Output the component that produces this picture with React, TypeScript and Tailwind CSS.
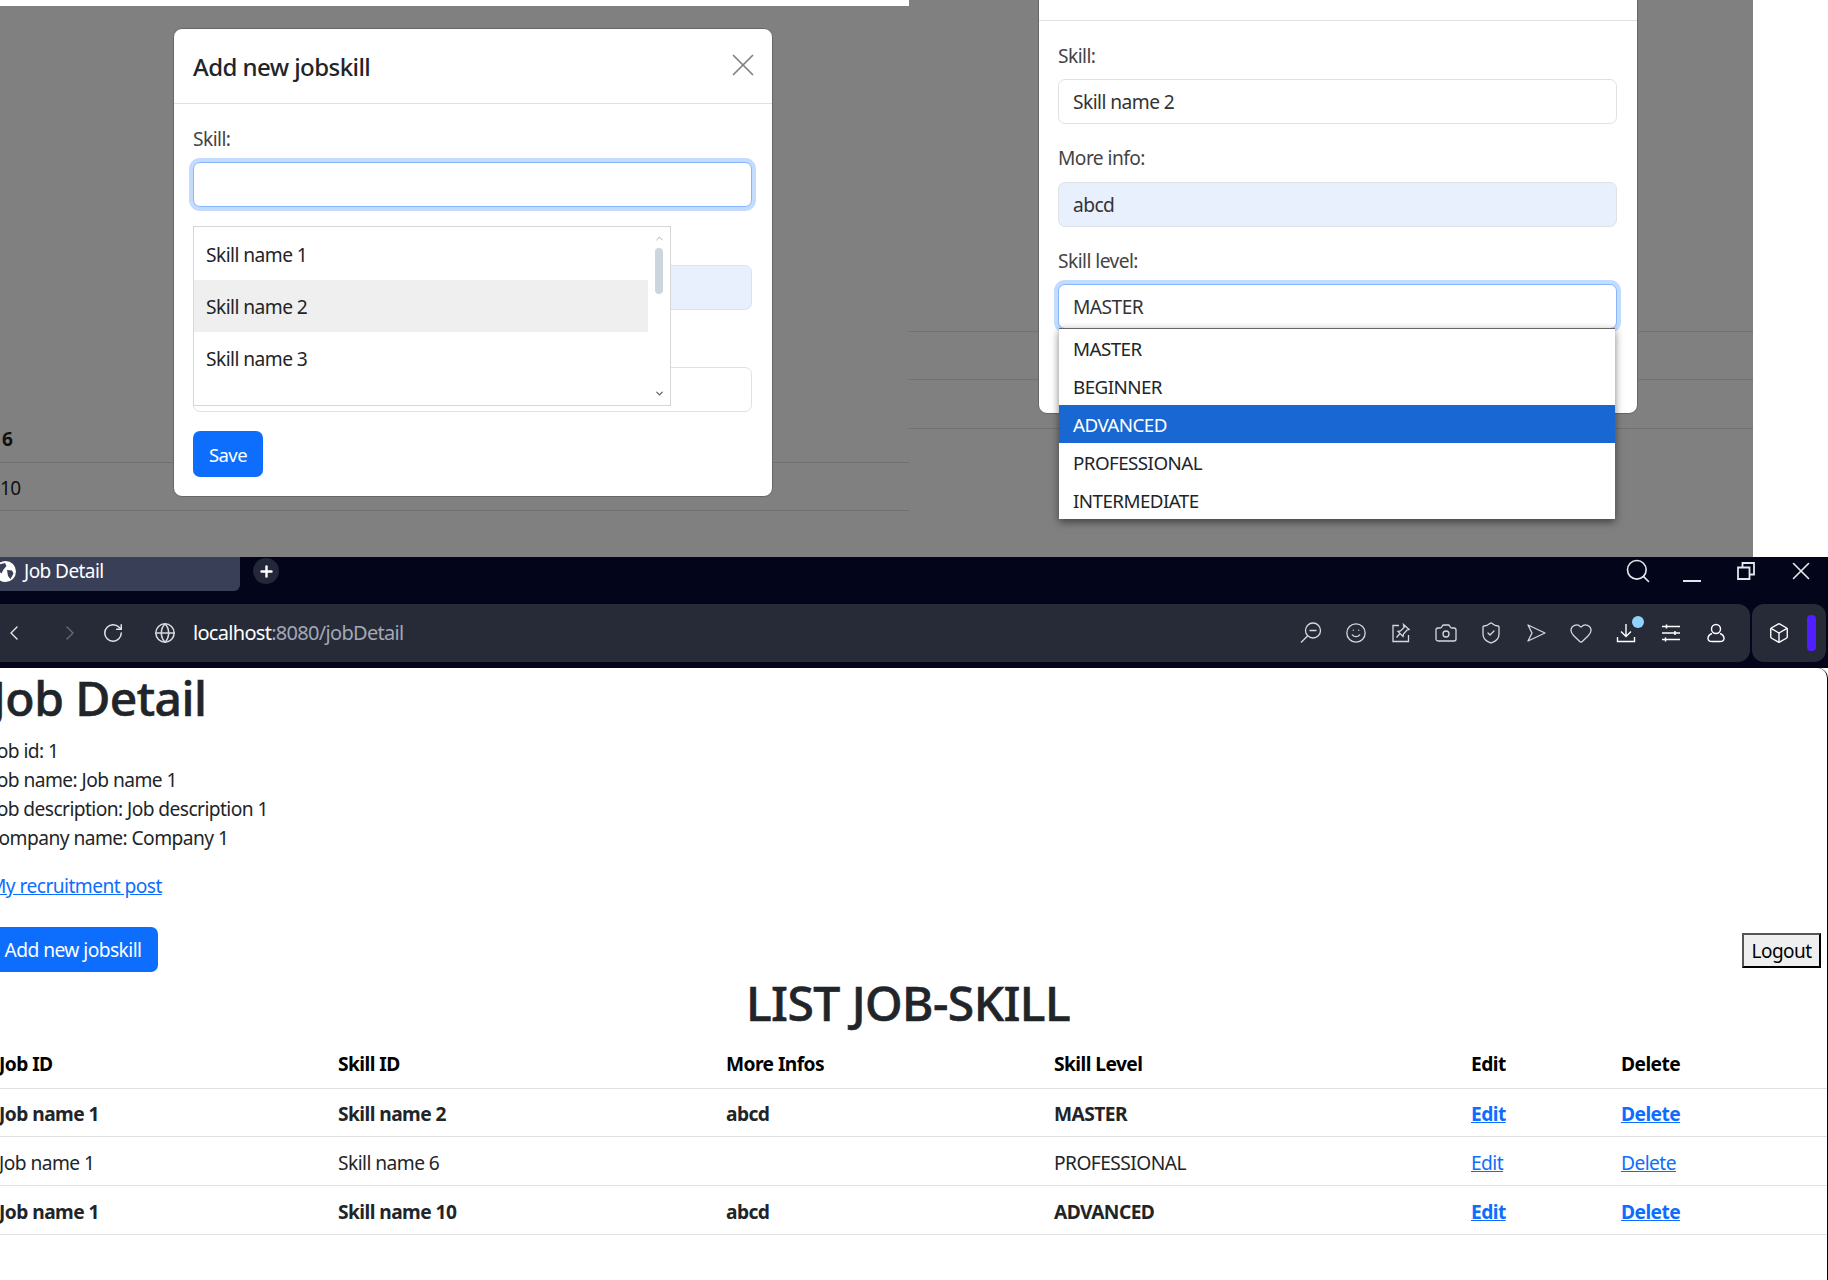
import { Box, Camera, ChevronDown, ChevronLeft, ChevronRight, ChevronUp, Globe, Heart, Plus, RotateCw, Search, ShieldCheck, Smile, X } from "lucide-react";

const ui = "font-['Noto_Sans',sans-serif] tracking-[-0.035em]";

const jobRows = [
  { skill: "Skill name 2", info: "abcd", level: "MASTER", bold: true },
  { skill: "Skill name 6", info: "", level: "PROFESSIONAL", bold: false },
  { skill: "Skill name 10", info: "abcd", level: "ADVANCED", bold: true },
];

const levels = ["MASTER", "BEGINNER", "ADVANCED", "PROFESSIONAL", "INTERMEDIATE"];

function Field({ label, value, tinted, focused, children }: { label: string; value?: string; tinted?: boolean; focused?: boolean; children?: React.ReactNode }) {
  return (
    <div className="mb-[19px]">
      <div className="mb-[9.6px] h-[28.8px] text-[19.2px] leading-[29px] text-[#444]">{label}</div>
      <div className="relative">
        <div
          className={`h-[45px] rounded-[7px] border px-[14px] text-[19.2px] leading-[43px] text-[#333] ${
            focused
              ? "border-[#86b7fe] bg-white shadow-[0_0_0_4px_rgba(13,110,253,0.25)]"
              : tinted
                ? "border-[#dee2e6] bg-[#e8f0fe]"
                : "border-[#dee2e6] bg-white"
          }`}
        >
          {value}
        </div>
        {children}
      </div>
    </div>
  );
}

function Modal({ className, children }: { className: string; children: React.ReactNode }) {
  return <div className={`absolute h-[469px] w-[600px] rounded-[9px] border border-[#666] bg-white ${className}`}>{children}</div>;
}

function ModalHeader() {
  return (
    <div className="flex h-[75px] items-center justify-between border-b border-[#dee2e6] pl-[19px] pr-[19px]">
      <span className="pt-[2px] text-[24px] font-medium text-[#212529]">Add new jobskill</span>
      <X size={38} strokeWidth={1.1} className="mb-[3px] mr-[-9px] text-[#808080]" />
    </div>
  );
}

function BackdropRow({ text, bold }: { text?: string; bold?: boolean }) {
  return <div className={`h-[48.5px] border-b border-[#6f7173] text-[19px] leading-[50px] text-[#111] ${bold ? "pl-[2px] font-bold" : ""}`}>{text}</div>;
}

function ToolIcon({ children }: { children: React.ReactNode }) {
  return <span className="flex h-[45px] w-[45px] items-center justify-center text-[#d6d8dd]">{children}</span>;
}

function Toolbar() {
  return (
    <div className="flex h-[64px] gap-[2px] bg-[#03061a] pb-[6px] pr-[2px]">
      <div className="flex h-[58px] flex-1 items-center rounded-r-[12px] bg-[#272b38]">
        <ChevronLeft size={24} strokeWidth={1.4} className="ml-[2px] text-[#e8e8e8]" />
        <ChevronRight size={24} strokeWidth={1.4} className="ml-[32px] text-[#666a75]" />
        <RotateCw size={22} strokeWidth={1.6} className="ml-[20px] text-[#e6e6e6]" />
        <Globe size={22} strokeWidth={1.7} className="ml-[30px] text-[#d6d8dd]" />
        <span className={`${ui} ml-[17px] text-[20px]`}>
          <span className="text-white">localhost</span>
          <span className="text-[#a3a8b4]">:8080/jobDetail</span>
        </span>
        <div className="ml-auto mr-[12px] flex">
          <ToolIcon>
            <svg width="22" height="22" viewBox="0 0 22 22" fill="none" stroke="currentColor" strokeWidth="1.3">
              <circle cx="13" cy="8.5" r="7.5" />
              <path d="M9.5 8.5h7M7.5 14L1 20.5" />
            </svg>
          </ToolIcon>
          <ToolIcon>
            <Smile size={22} strokeWidth={1.4} />
          </ToolIcon>
          <ToolIcon>
            <svg width="20" height="20" viewBox="0 0 20 20" fill="none" stroke="currentColor" strokeWidth="1.3">
              <path d="M8 2.5H2v16h15.5V12" />
              <path d="M12.5 1.5l5.5 5-2 .5-3.5 4-.5 2.5-5-5 2.5-.5 3.5-3.5zM9 10.5l-3.5 4" />
            </svg>
          </ToolIcon>
          <ToolIcon>
            <Camera size={24} strokeWidth={1.3} />
          </ToolIcon>
          <ToolIcon>
            <ShieldCheck size={24} strokeWidth={1.3} />
          </ToolIcon>
          <ToolIcon>
            <svg width="20" height="20" viewBox="0 0 20 20" fill="none" stroke="currentColor" strokeWidth="1.3" strokeLinejoin="round">
              <path d="M2 2l17 8-17 8 4-8z" />
            </svg>
          </ToolIcon>
          <ToolIcon>
            <Heart size={24} strokeWidth={1.3} />
          </ToolIcon>
          <ToolIcon>
            <span className="relative">
              <svg width="20" height="20" viewBox="0 0 20 20" fill="none" stroke="currentColor" strokeWidth="1.4" className="text-white">
                <path d="M10 1v12M5 8.5l5 5 5-5M1.5 14v4.5h17V14" />
              </svg>
              <span className="absolute left-[16px] top-[-7px] h-[12px] w-[12px] rounded-full bg-[#8fd4ff]" />
            </span>
          </ToolIcon>
          <ToolIcon>
            <svg width="20" height="20" viewBox="0 0 20 20" fill="none" stroke="currentColor" strokeWidth="1.5" className="text-white">
              <path d="M1 3.5h18M1 10h18M1 16.5h18M5.5 1.5v4M14 8v4M4.5 14.5v4" />
            </svg>
          </ToolIcon>
          <ToolIcon>
            <svg width="20" height="20" viewBox="0 0 20 20" fill="none" stroke="currentColor" strokeWidth="1.4" className="text-white">
              <circle cx="10" cy="6" r="4.5" />
              <path d="M6 10.5C3.5 11.5 2 13 2 15.5c0 2.5 2 3 4 3h8c2 0 4-.5 4-3 0-2.5-1.5-4-4-5" />
            </svg>
          </ToolIcon>
        </div>
      </div>
      <div className="flex h-[58px] w-[74px] items-center rounded-[12px] bg-[#272b38] pl-[16px]">
        <Box size={22} strokeWidth={1.5} className="text-white" />
        <span className="ml-[17px] h-[36px] w-[9px] rounded-[4px] bg-[#4f1fff]" />
      </div>
    </div>
  );
}

export default function App() {
  return (
    <div className={`${ui} h-[1280px] w-[1828px] overflow-hidden bg-white`}>
      {/* two cropped modal screenshots */}
      <div className="flex h-[557px]">
        <div className="relative w-[909px] overflow-hidden">
          <div className="h-[6px] bg-white" />
          <div className="h-[551px] bg-[#808080] pt-[408px]">
            <BackdropRow text="6" bold />
            <BackdropRow text="10" />
          </div>
          <Modal className="left-[173px] top-[28px]">
            <ModalHeader />
            <div className="relative pb-[19px] pl-[19px] pr-[20px] pt-[20px]">
              <Field label="Skill:" focused />
              <Field label="More info:" tinted />
              <Field label="Skill level:" />
              <button className="h-[46px] w-[70px] rounded-[7px] bg-[#0d6efd] pt-[1px] text-[18.5px] text-white">Save</button>
              <div className="absolute left-[19px] top-[122px] flex h-[180px] w-[478px] border border-[#d6d6d6] bg-white text-[19.2px] text-[#212529]">
                <div className="w-[454px] pt-[1px]">
                  <div className="flex h-[52px] items-center pl-[12px] pt-[2px]">Skill name 1</div>
                  <div className="flex h-[52px] items-center bg-[#efefef] pl-[12px] pt-[2px]">Skill name 2</div>
                  <div className="flex h-[52px] items-center pl-[12px] pt-[2px]">Skill name 3</div>
                </div>
                <div className="flex w-[22px] flex-col items-center pt-[6px]">
                  <ChevronUp size={11} strokeWidth={2} className="text-[#aaa]" />
                  <span className="mt-[4px] h-[46px] w-[8px] rounded-[4px] bg-[#ced6dd]" />
                  <ChevronDown size={11} strokeWidth={2.4} className="mb-[6px] mt-auto text-[#555]" />
                </div>
              </div>
            </div>
          </Modal>
        </div>
        <div className="relative w-[844px] overflow-hidden bg-[#808080]">
          <div className="pt-[283px]">
            <BackdropRow />
            <BackdropRow />
            <BackdropRow />
          </div>
          <Modal className="left-[129px] top-[-55px]">
            <ModalHeader />
            <div className="pb-[19px] pl-[19px] pr-[20px] pt-[20px]">
              <Field label="Skill:" value="Skill name 2" />
              <Field label="More info:" value="abcd" tinted />
              <Field label="Skill level:" value="MASTER" focused>
                <div className="absolute left-[1px] top-[44px] z-10 w-[556px] border-t border-[#666] bg-white text-[18.8px] text-[#212529] shadow-[0_3px_8px_rgba(0,0,0,0.5)]">
                  {levels.map((level) => (
                    <div key={level} className={`h-[38px] pl-[14px] leading-[40px] ${level === "ADVANCED" ? "bg-[#1967d2] text-white" : ""}`}>
                      {level}
                    </div>
                  ))}
                </div>
              </Field>
            </div>
          </Modal>
        </div>
      </div>

      {/* browser chrome */}
      <div className="flex h-[47px] bg-[#03061a] text-white">
        <div className="flex h-[34px] w-[240px] items-center rounded-br-[6px] bg-[#3a3f58] pb-[6px]">
          <svg width="21" height="21" viewBox="0 0 21 21" className="ml-[-5px] shrink-0">
            <circle cx="10.5" cy="10.5" r="10.5" fill="#fff" />
            <path d="M4 3.5l6-1.5 1.5 3-3 3.5-2 4L3 9.5zM12 9l5 .5 1.5 3-3 5.5-2.5-3z" fill="#3a3f58" />
          </svg>
          <span className="ml-[8px] text-[19px]">Job Detail</span>
        </div>
        <span className="ml-[13px] mt-[1px] flex h-[26px] w-[26px] items-center justify-center rounded-full bg-[#23273a]">
          <Plus size={17} strokeWidth={3.4} />
        </span>
        <div className="ml-auto mr-[12px] flex text-[#e4e6eb]">
          <Search size={28} strokeWidth={1.4} className="mr-[31px]" />
          <span className="mr-[36px] mt-[23px] h-[2px] w-[18px] bg-[#e4e6eb]" />
          <svg width="18" height="18" viewBox="0 0 18 18" fill="none" stroke="currentColor" strokeWidth="1.8" className="mr-[31px] mt-[5px]">
            <path d="M1 5.5h11.5V17H1zM5.5 5V1H17v11.5h-4" />
          </svg>
          <X size={30} strokeWidth={1.3} className="mt-[-1px]" />
        </div>
      </div>
      <Toolbar />

      {/* page */}
      <div className="h-[612px] rounded-tr-[10px] border-r border-black bg-white text-[#212529]">
        <div className="ml-[-8px]">
          <h1 className="pt-[1px] text-[48px] font-medium leading-[57.6px] [-webkit-text-stroke:0.6px_#212529]">Job Detail</h1>
          <div className="mt-[9px] text-[19.2px] leading-[29px]">
            <p>Job id: 1</p>
            <p>Job name: Job name 1</p>
            <p className="tracking-[-0.03em]">Job description: Job description 1</p>
            <p className="ml-[-5px]">Company name: Company 1</p>
          </div>
          <a className="ml-[-3px] mt-[19px] block text-[19.2px] leading-[29px] text-[#0d6efd] underline">My recruitment post</a>
        </div>
        <div className="mt-[27px] flex items-start justify-between">
          <button className="ml-[-12px] h-[45px] w-[170px] rounded-r-[7px] bg-[#0d6efd] pt-[2px] text-[19.2px] text-white">Add new jobskill</button>
          <button className="mr-[6px] mt-[6px] h-[35px] w-[79px] border-2 border-b-black border-l-[#555] border-r-black border-t-[#555] bg-[#efefef] pt-[1px] text-[19px] leading-[30px] text-black">Logout</button>
        </div>
        <h2 className="mt-[2px] pr-[11px] text-center text-[48px] font-medium leading-[57.6px] [-webkit-text-stroke:0.6px_#212529]">LIST JOB-SKILL</h2>
        <table className="ml-[-19px] mt-[8px] w-[1846px] table-fixed text-left text-[19.2px] leading-[29px]">
          <thead>
            <tr className="h-[49px] border-b border-[#dee2e6] text-black">
              <th className="w-[347px] pl-[18px] pt-[1px] font-bold">Job ID</th>
              <th className="w-[388px] pl-[10px] pt-[1px] font-bold">Skill ID</th>
              <th className="w-[328px] pl-[10px] pt-[1px] font-bold">More Infos</th>
              <th className="w-[417px] pl-[10px] pt-[1px] font-bold">Skill Level</th>
              <th className="w-[150px] pl-[10px] pt-[1px] font-bold">Edit</th>
              <th className="pl-[10px] pt-[1px] font-bold">Delete</th>
            </tr>
          </thead>
          <tbody>
            {jobRows.map((row) => (
              <tr key={row.skill} className={`h-[48.8px] border-b border-[#dee2e6] ${row.bold ? "font-bold" : ""}`}>
                <td className="pl-[18px] pt-[2px]">Job name 1</td>
                <td className="pl-[10px] pt-[2px]">{row.skill}</td>
                <td className="pl-[10px] pt-[2px]">{row.info}</td>
                <td className="pl-[10px] pt-[2px]">{row.level}</td>
                <td className="pl-[10px] pt-[2px]">
                  <a className="text-[#0d6efd] underline">Edit</a>
                </td>
                <td className="pl-[10px] pt-[2px]">
                  <a className="text-[#0d6efd] underline">Delete</a>
                </td>
              </tr>
            ))}
          </tbody>
        </table>
      </div>
    </div>
  );
}
